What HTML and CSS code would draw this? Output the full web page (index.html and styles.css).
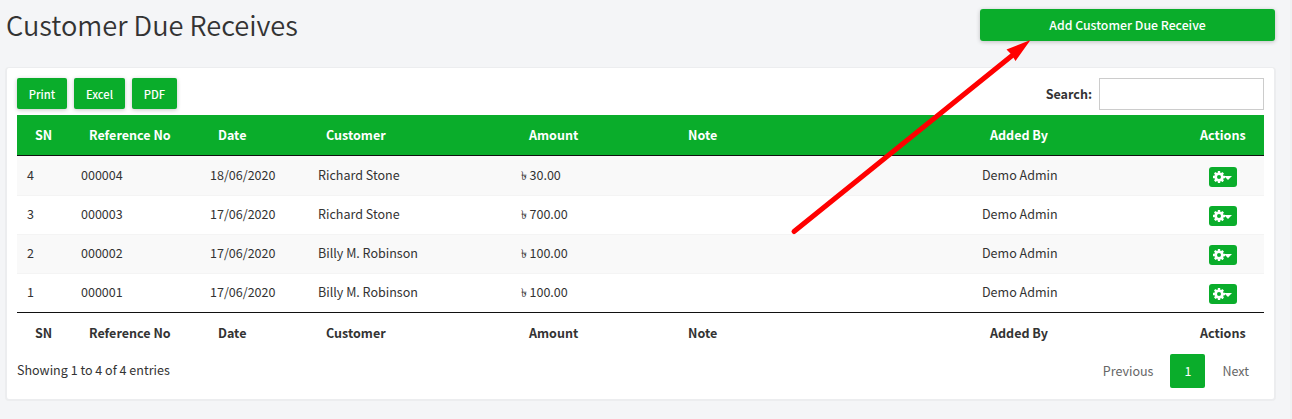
FILE: index.html
```html
<!DOCTYPE html>
<html lang="en">
<head>
<meta charset="utf-8">
<title>Customer Due Receives</title>
<link rel="stylesheet" href="styles.css">
</head>
<body>
<svg class="defs" width="0" height="0" aria-hidden="true">
  <symbol id="cog" viewBox="0 0 1536 1536"><path fill="currentColor" fill-rule="evenodd" d="M1024 768a256 256 0 1 0-512 0a256 256 0 1 0 512 0zM1536 659v222q0 12-8 23t-20 13l-185 28q-19 54-39 91q35 50 107 138q10 12 10 25t-9 23q-27 37-99 108t-94 71q-12 0-26-9l-138-108q-44 23-91 38q-16 136-29 186q-7 28-36 28H657q-14 0-24.500-8.500T621 1506l-28-184q-49-16-90-37l-141 107q-10 9-25 9q-14 0-25-11q-126-114-165-168q-7-10-7-23q0-12 8-23q15-21 51-66.500t54-70.500q-27-50-41-99L29 913q-13-2-21-12.500T0 877V655q0-12 8-23t19-13l186-28q14-46 39-92q-40-57-107-138q-10-12-10-24q0-10 9-23q26-36 98.500-107.500T337 135q13 0 26 10l138 107q44-23 91-38q16-136 29-186q7-28 36-28h222q14 0 24.500 8.500T915 30l28 184q49 16 90 37l142-107q9-9 24-9q13 0 25 10q129 119 165 170q7 8 7 22q0 12-8 23q-15 21-51 66.500t-54 70.500q26 50 41 98l183 28q13 2 21 12.500t8 23.500z"/></symbol>
</svg>
<header class="page-head">
  <h1>Customer Due Receives</h1>
  <a class="btn add">Add Customer Due Receive</a>
</header>
<main class="card">
  <div class="toolbar">
    <div class="exports">
      <button class="btn print">Print</button><button class="btn excel">Excel</button><button class="btn pdf">PDF</button>
    </div>
    <label class="search">Search:<input type="text"></label>
  </div>
  <table class="grid">
    <colgroup><col class="c-sn"><col class="c-ref"><col class="c-date"><col class="c-cust"><col class="c-amt"><col class="c-note"><col class="c-by"><col class="c-act"></colgroup>
    <thead><tr><th>SN</th><th>Reference No</th><th>Date</th><th>Customer</th><th>Amount</th><th>Note</th><th>Added By</th><th>Actions</th></tr></thead>
    <tbody>
      <tr><td>4</td><td>000004</td><td>18/06/2020</td><td>Richard Stone</td><td><span class="taka">৳</span>30.00</td><td></td><td>Demo Admin</td><td><button class="cog"><svg class="gear"><use href="#cog"/></svg><i class="caret"></i></button></td></tr>
      <tr><td>3</td><td>000003</td><td>17/06/2020</td><td>Richard Stone</td><td><span class="taka">৳</span>700.00</td><td></td><td>Demo Admin</td><td><button class="cog"><svg class="gear"><use href="#cog"/></svg><i class="caret"></i></button></td></tr>
      <tr><td>2</td><td>000002</td><td>17/06/2020</td><td>Billy M. Robinson</td><td><span class="taka">৳</span>100.00</td><td></td><td>Demo Admin</td><td><button class="cog"><svg class="gear"><use href="#cog"/></svg><i class="caret"></i></button></td></tr>
      <tr><td>1</td><td>000001</td><td>17/06/2020</td><td>Billy M. Robinson</td><td><span class="taka">৳</span>100.00</td><td></td><td>Demo Admin</td><td><button class="cog"><svg class="gear"><use href="#cog"/></svg><i class="caret"></i></button></td></tr>
    </tbody>
    <tfoot><tr><th>SN</th><th>Reference No</th><th>Date</th><th>Customer</th><th>Amount</th><th>Note</th><th>Added By</th><th>Actions</th></tr></tfoot>
  </table>
  <div class="bottom">
    <div class="info">Showing 1 to 4 of 4 entries</div>
    <nav class="pager"><a class="prev">Previous</a><a class="current">1</a><a class="next">Next</a></nav>
  </div>
</main>
<svg class="arrow" width="1292" height="419" viewBox="0 0 1292 419">
  <path d="M794 231.500L1014 54" stroke="#f00" stroke-width="5" stroke-linecap="round"/>
  <path d="M1030.500 40L1006.500 49.500L1011.500 54.500L1015.500 61Z" fill="#f00"/>
</svg>
</body>
</html>
```
FILE: styles.css
```css
* { box-sizing: border-box; }
body {
  margin: 0;
  height: 419px;
  overflow: hidden;
  background: #f4f5f7;
  border-right: 2px solid #f0f1f3;
  color: #333;
  font: 12.54px/20px "Noto Sans CJK SC", "Noto Sans", sans-serif;
}
.defs { position: absolute; }
.page-head {
  display: flex;
  justify-content: space-between;
  align-items: flex-start;
  height: 67px;
  padding: 9px 15px 0 6px;
}
h1 {
  margin: 0;
  font-size: 27.2px;
  font-weight: 350;
  line-height: 30px;
}
.btn {
  display: flex;
  align-items: center;
  justify-content: center;
  border: 0;
  border-radius: 2px;
  padding: 0;
  background: #0aad2b;
  color: #fff;
  font: 500 11.2px/20px "Noto Sans CJK SC", sans-serif;
  box-shadow: 0 1px 4px rgba(0, 0, 0, .22);
}
.add { width: 295px; height: 32px; border-radius: 3px; font-size: 12.3px; }
.card {
  width: 1271px;
  height: 334px;
  margin-left: 5px;
  padding: 10px 10px 0 10px;
  background: #fff;
  border: 2px solid #ecedef;
  border-top-width: 1px;
  border-radius: 4px;
}
.toolbar { display: flex; justify-content: space-between; height: 37px; }
.exports { display: flex; gap: 7px; }
.exports .btn { height: 31px; }
.print { width: 50px; }
.excel { width: 51px; }
.pdf { width: 45px; }
.search { display: flex; gap: 7px; height: 32px; line-height: 32px; font-weight: 700; }
.search input { width: 165px; height: 32px; border: 1px solid #ccc; padding: 0; }
.grid { width: 1247px; table-layout: fixed; border-collapse: separate; border-spacing: 0; }
.c-sn { width: 54px; }
.c-ref { width: 129px; }
.c-date { width: 108px; }
.c-cust { width: 203px; }
.c-amt { width: 159px; }
.c-note { width: 302px; }
.c-by { width: 210px; }
.c-act { width: 82px; }
th { height: 41px; padding: 0 0 0 18px; text-align: left; font-weight: 700; }
thead th { background: #0aad2b; color: #fff; border-bottom: 1px solid #111; }
tfoot th { border-top: 1px solid #111; }
td { height: 39px; padding: 8px 0 0 10px; vertical-align: top; border-bottom: 1px solid #f4f4f4; }
tbody tr:nth-child(odd) td { background: #f9f9f9; }
tbody tr:first-child td { height: 40px; padding-top: 9px; }
tbody tr:last-child td { height: 38px; border-bottom: 0; }
td:last-child { padding: 10px 0 0 27px; }
tbody tr:first-child td:last-child { padding-top: 11px; }
.taka { float: left; width: 8.500px; font-size: 11.5px; text-indent: -0.5px; }
.cog {
  display: flex;
  align-items: center;
  width: 28px;
  height: 20px;
  padding: 0 0 0 4px;
  border: 0;
  border-radius: 3px;
  background: #0aad2b;
  color: #fff;
}
.gear { width: 12px; height: 12px; }
.caret { margin: 2px 0 0 -1px; border: 4px solid transparent; border-top: 4px solid #fff; border-bottom: 0; }
.bottom { display: flex; justify-content: space-between; }
.info { line-height: 34px; }
.pager { display: flex; margin: 1px 15px 0 0; line-height: 34px; color: #666; }
.current { width: 35px; height: 34px; margin: 0 17px; border-radius: 2px; background: #0aad2b; color: #fff; text-align: center; }
.arrow { position: absolute; left: 0; top: 0; pointer-events: none; }
```
